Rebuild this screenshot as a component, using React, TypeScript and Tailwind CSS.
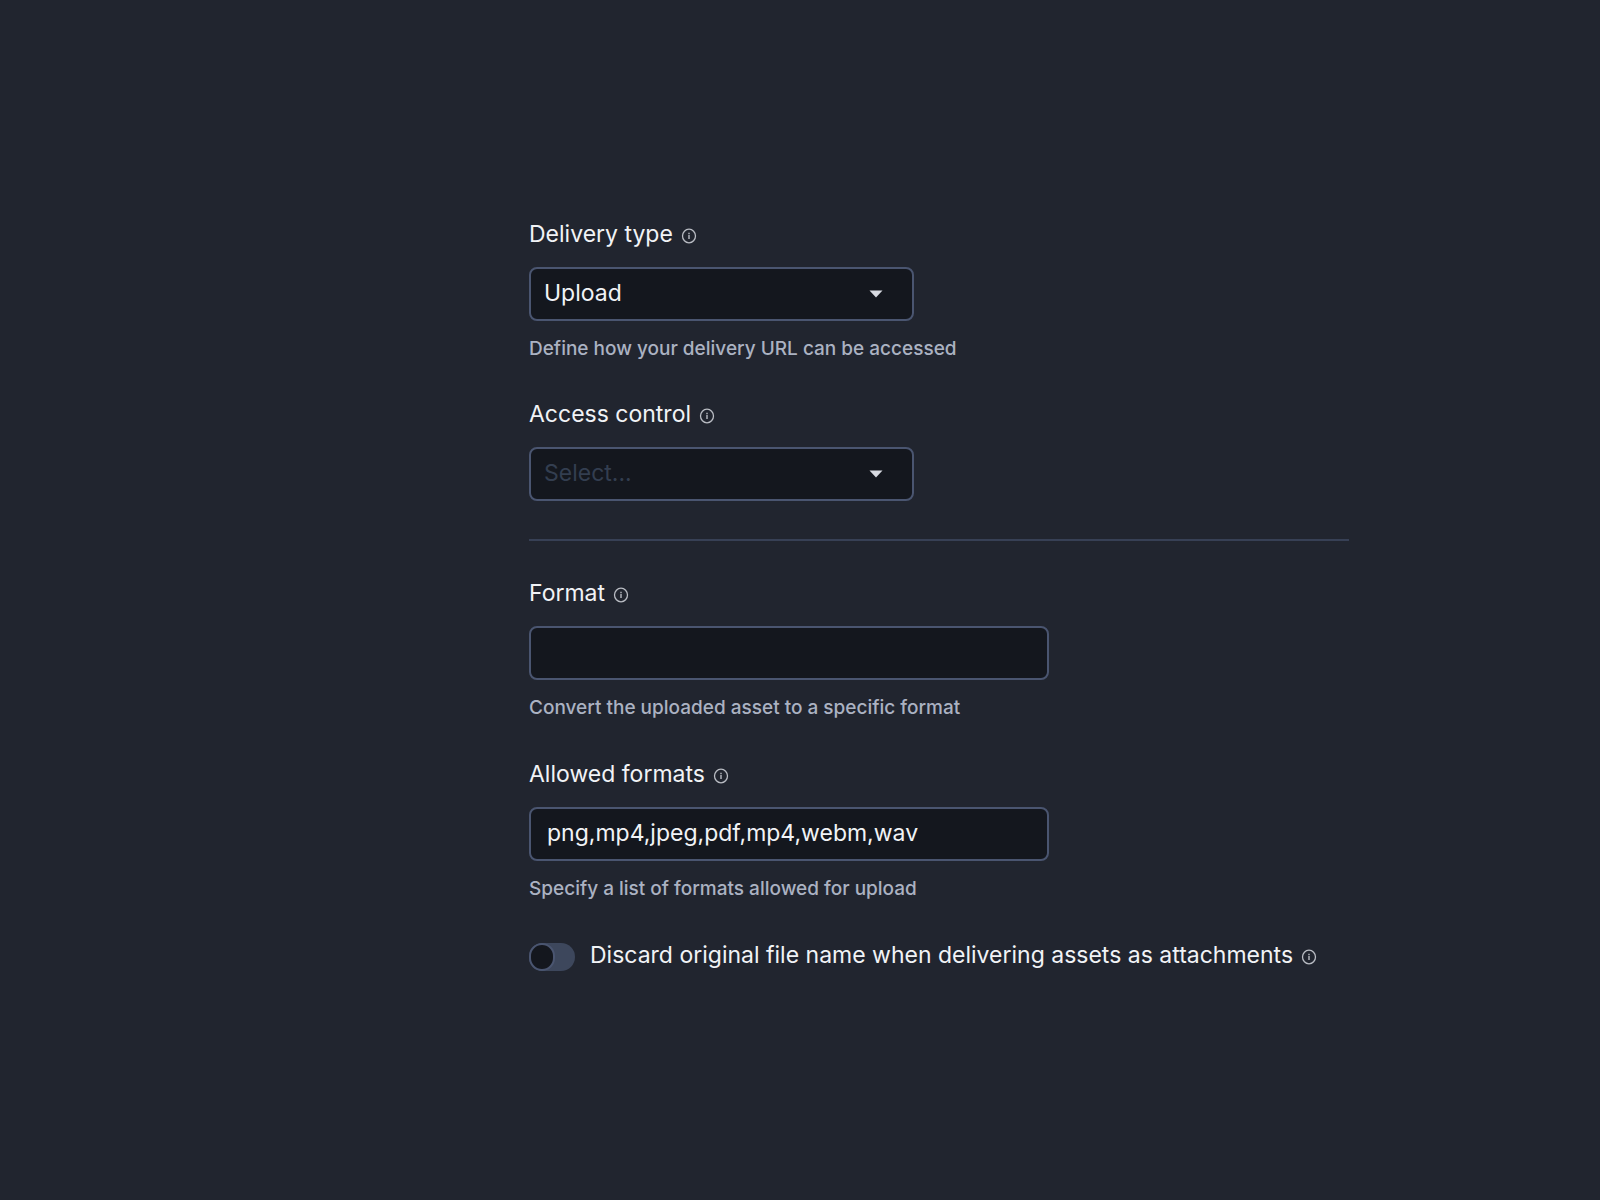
import { useState } from "react";
import type { ReactNode } from "react";

const InfoIcon = () => (
  <svg
    viewBox="0 0 16 16"
    className="w-4 h-4 mt-1 shrink-0 text-[#b9bcc3]"
    fill="none"
    stroke="currentColor"
    aria-hidden="true"
  >
    <ellipse cx="8" cy="8" rx="6.5" ry="6.8" strokeWidth="1.3" />
    <path d="M8 4.8v1.2M8 6.8v4.2" strokeWidth="1.4" />
  </svg>
);

type FieldProps = {
  id: string;
  label: string;
  help?: string;
  children: ReactNode;
};

const Field = ({ id, label, help, children }: FieldProps) => (
  <div className="flex flex-col">
    <div className="flex items-center gap-2 h-8 mb-[17px]">
      <label htmlFor={id} className="text-[23px] leading-8">
        {label}
      </label>
      <InfoIcon />
    </div>
    {children}
    {help && (
      <p className="mt-4 text-[19px] leading-6 font-medium text-[#abb2c2]">
        {help}
      </p>
    )}
  </div>
);

type SelectProps = {
  id: string;
  value: string;
  options: string[];
  onChange: (value: string) => void;
};

const Select = ({ id, value, options, onChange }: SelectProps) => (
  <div className="relative w-[47%]">
    <select
      id={id}
      value={value}
      onChange={(e) => onChange(e.target.value)}
      className={`block w-full h-[54px] pl-[13px] pr-12 pb-0.5 appearance-none rounded-lg border-2 border-[#4a5570] bg-[#14171e] text-[23px] outline-none ${
        value ? "text-[#f1f3f6]" : "text-[#333e50]"
      }`}
    >
      <option value="" disabled hidden>
        Select...
      </option>
      {options.map((option) => (
        <option key={option}>{option}</option>
      ))}
    </select>
    <svg
      viewBox="0 0 14 8"
      className="absolute right-[31px] top-[23px] w-[14px] h-2 pointer-events-none"
      aria-hidden="true"
    >
      <path d="M0.5 0.5h13L7 7.5z" fill="#d8dbe2" />
    </svg>
  </div>
);

type TextInputProps = {
  id: string;
  value: string;
  onChange: (value: string) => void;
};

const TextInput = ({ id, value, onChange }: TextInputProps) => (
  <input
    id={id}
    type="text"
    value={value}
    onChange={(e) => onChange(e.target.value)}
    className="w-[63.4%] h-[54px] px-4 pb-0.5 rounded-lg border-2 border-[#4a5570] bg-[#14171e] text-[23px] outline-none"
  />
);

export default function App() {
  const [deliveryType, setDeliveryType] = useState("Upload");
  const [accessControl, setAccessControl] = useState("");
  const [format, setFormat] = useState("");
  const [allowed, setAllowed] = useState("png,mp4,jpeg,pdf,mp4,webm,wav");
  const [discard, setDiscard] = useState(false);

  return (
    <main className="min-h-screen grid grid-cols-[529fr_820fr_251fr] bg-[#21252f] text-[#f1f3f6] font-['Inter',sans-serif]">
      <form className="col-start-2 flex flex-col pt-[218px] pb-16">
        <div className="flex flex-col gap-[37px]">
          <Field
            id="delivery-type"
            label="Delivery type"
            help="Define how your delivery URL can be accessed"
          >
            <Select
              id="delivery-type"
              value={deliveryType}
              options={["Upload", "Private", "Authenticated"]}
              onChange={setDeliveryType}
            />
          </Field>
          <Field id="access-control" label="Access control">
            <Select
              id="access-control"
              value={accessControl}
              options={["Public", "Restricted"]}
              onChange={setAccessControl}
            />
          </Field>
        </div>

        <hr className="mt-[38px] mb-9 border-t-2 border-[#374055]" />

        <div className="flex flex-col gap-[38px]">
          <Field
            id="format"
            label="Format"
            help="Convert the uploaded asset to a specific format"
          >
            <TextInput id="format" value={format} onChange={setFormat} />
          </Field>
          <Field
            id="allowed-formats"
            label="Allowed formats"
            help="Specify a list of formats allowed for upload"
          >
            <TextInput
              id="allowed-formats"
              value={allowed}
              onChange={setAllowed}
            />
          </Field>

          <div className="flex items-center">
            <input
              id="discard-name"
              type="checkbox"
              role="switch"
              checked={discard}
              onChange={(e) => setDiscard(e.target.checked)}
              className="appearance-none shrink-0 w-[46px] h-7 mt-1 mr-[15px] rounded-full bg-[#3d475c] before:block before:w-[26px] before:h-7 before:rounded-full before:border-2 before:border-[#4a5570] before:bg-[#14171e] checked:before:translate-x-5"
            />
            <label
              htmlFor="discard-name"
              className="text-[23px] leading-8 whitespace-nowrap mr-2"
            >
              Discard original file name when delivering assets as attachments
            </label>
            <InfoIcon />
          </div>
        </div>
      </form>
    </main>
  );
}
